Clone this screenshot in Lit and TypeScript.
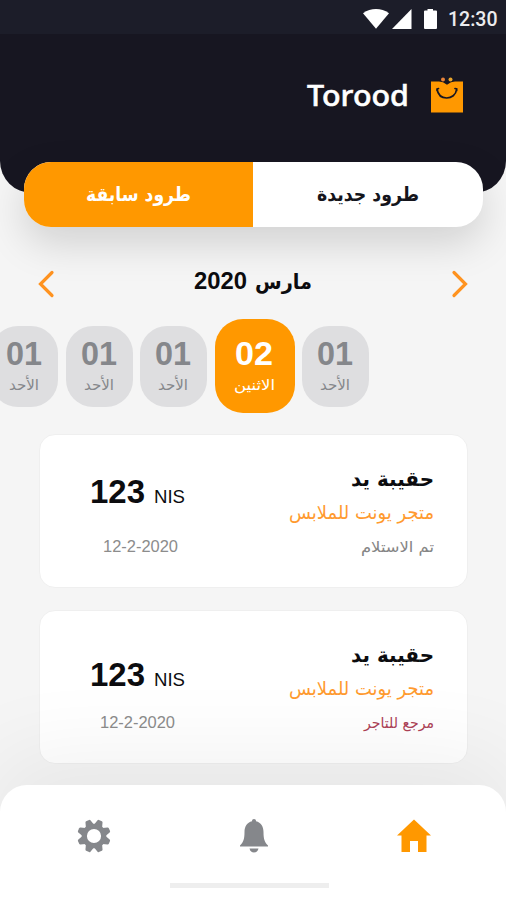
import { LitElement, html, css, svg } from "lit";
import { customElement } from "lit/decorators.js";

/** One line of text set to a given width; the baseline is the bottom of its box. */
const line = (text: string, width: number, cls: string) => html`
  <svg class="line ${cls}" width=${width} height="10" direction="ltr">
    <text x="0" y="10" textLength=${width} lengthAdjust="spacingAndGlyphs">${text}</text>
  </svg>`;

interface Day { num: string; name: string; active?: boolean }
interface Parcel { status: string; statusWidth: number; returned: boolean; kind: string }

const DAYS: Day[] = [
  { num: "01", name: "الأحد" },
  { num: "01", name: "الأحد" },
  { num: "01", name: "الأحد" },
  { num: "02", name: "الاثنين", active: true },
  { num: "01", name: "الأحد" },
];

const PARCELS: Parcel[] = [
  { status: "تم الاستلام", statusWidth: 73, returned: false, kind: "first" },
  { status: "مرجع للتاجر", statusWidth: 70, returned: true, kind: "second" },
];

const TEETH = [22.5, 67.5, 112.5, 157.5, 202.5, 247.5, 292.5, 337.5];

@customElement("app-root")
export class AppRoot extends LitElement {
  static styles = css`
    :host {
      display: flex;
      flex-direction: column;
      height: 900px;
      width: 506px;
      overflow: hidden;
      background: #f5f5f5;
      font-family: "Liberation Sans", "DejaVu Sans", sans-serif;
    }
    svg { display: block; overflow: visible; flex: none; }
    .line text { fill: currentColor; }
    .ar { font-family: "DejaVu Sans", sans-serif; }
    .header {
      height: 193px;
      background: #171621;
      border-radius: 0 0 32px 32px;
      flex: none;
    }
    .status {
      height: 34px;
      background: #1c1d29;
      display: flex;
      justify-content: flex-end;
      align-items: flex-start;
      box-sizing: border-box;
      padding: 9px 9px 0 0;
    }
    .time { margin-top: 7px; margin-left: 11px; font: 500 19.5px Roboto, sans-serif; color: #ececee; }
    .brand { display: flex; justify-content: flex-end; gap: 22px; padding: 43px 43px 0 0; }
    .name { margin-top: 19px; font: 500 29px "Noto Sans", sans-serif; color: #fff; }
    .name text { stroke: #fff; stroke-width: 0.5px; }
    .tabs {
      display: flex;
      flex: none;
      width: 459px;
      height: 65px;
      margin: -31px 0 0 23.5px;
      border-radius: 27px;
      overflow: hidden;
      background: #fff;
      box-shadow: 0 16px 40px rgba(0, 0, 0, 0.15);
      position: relative;
    }
    .tab { flex: 1; display: flex; justify-content: center; padding-top: 29px; color: #15151c; }
    .tab.on { background: #ff9800; color: #fff; }
    .tabtext { font-weight: 700; font-size: 19.5px; }
    .month {
      display: flex;
      justify-content: space-between;
      flex: none;
      height: 26px;
      margin: 44px 38px 0;
    }
    .title { display: flex; gap: 8px; padding: 8px 0 0 0; color: #0c0c0f; }
    .year { font-weight: 700; font-size: 23.5px; }
    .mname { font-weight: 700; font-size: 20.5px; }
    .days {
      display: flex;
      flex: none;
      gap: 7.5px;
      align-items: center;
      height: 94px;
      margin: 22px 0 0 -9px;
    }
    .day {
      width: 67px;
      height: 81px;
      flex: none;
      border-radius: 27px;
      background: #dedee0;
      color: #85878b;
      display: flex;
      flex-direction: column;
      align-items: center;
      box-sizing: border-box;
      padding: 29px 1px 0 0;
    }
    .day.on { width: 80px; height: 94px; padding-top: 36px; border-radius: 28px; background: #ff9800; color: #fff; }
    .num { font-weight: 700; font-size: 32.5px; }
    .dname { font-size: 15px; margin-top: 15px; }
    .cards { display: flex; flex-direction: column; gap: 22px; padding: 21px 38.5px 0 38.5px; flex: none; }
    .card {
      display: flex;
      justify-content: space-between;
      height: 154px;
      box-sizing: border-box;
      border: 1px solid #efefef;
      border-radius: 16px;
      background: #fff;
      padding: 0 32.5px 0 47.5px;
    }
    .left, .right { display: flex; flex-direction: column; }
    .right { align-items: flex-end; padding-top: 41px; }
    .left { align-items: center; padding-top: 58px; width: 100px; }
    .second .left { padding-top: 65px; }
    .item { font-weight: 700; font-size: 20.5px; color: #0c0c0f; }
    .store { font-size: 18.5px; color: #ff9a2e; margin-top: 23px; }
    .state { font-size: 15px; color: #858585; margin-top: 23px; }
    .state.back { color: #ad4257; }
    .amount { display: flex; gap: 9px; color: #0c0c0f; }
    .sum { font-weight: 700; font-size: 33px; }
    .cur { font-size: 19px; }
    .date { font-size: 16.3px; color: #8c8c8c; margin: 39px 0 0 7px; }
    .second .date { margin: 32px 0 0 1px; }
    .nav {
      height: 115px;
      flex: none;
      margin-top: auto;
      background: #fff;
      border-radius: 27px 27px 0 0;
      box-shadow: 0 -20px 90px 10px rgba(0, 0, 0, 0.06);
      display: flex;
      flex-direction: column;
      align-items: center;
      position: relative;
    }
    .icons { display: flex; justify-content: space-between; width: 354px; padding-top: 34px; height: 64px; margin-left: 2px; }
    .bar { width: 159px; height: 5px; background: #eee; margin-right: 8px; }
  `;

  private statusBar() {
    return html`
      <div class="status">
        <svg width="74" height="20" viewBox="0 0 74 20" fill="#fff">
          <path d="M0 4.2C8-1.4 18-1.4 26 4.2L13 19.8Z" />
          <path d="M48.500 0V20H29Z" />
          <path d="M61 2.500Q61 1.500 62 1.500H64.500V0H70V1.500H73Q74 1.500 74 2.500V19Q74 20 73 20H62Q61 20 61 19Z" />
        </svg>
        ${line("12:30", 49.5, "time")}
      </div>`;
  }

  private gear() {
    return svg`
      <g fill="#85878b">
        ${TEETH.map((a) => svg`<path transform="rotate(${a} 17 17)" d="M12.800 6L14.300 1.200Q14.600 .3 15.400 .3H18.600Q19.400 .3 19.700 1.200L21.200 6Z" />`)}
        <circle cx="17" cy="17" r="9.700" fill="none" stroke="#85878b" stroke-width="5.200" />
      </g>`;
  }

  private card(p: Parcel) {
    return html`
      <article class="card ${p.kind}">
        <div class="left">
          <div class="amount">${line("123", 55, "sum")}${line("NIS", 31, "cur")}</div>
          ${line("12-2-2020", 75, "date")}
        </div>
        <div class="right">
          ${line("حقيبة يد", 83, "ar item")}
          ${line("متجر يونت للملابس", 145, "ar store")}
          ${line(p.status, p.statusWidth, p.returned ? "ar state back" : "ar state")}
        </div>
      </article>`;
  }

  render() {
    return html`
      <header class="header">
        ${this.statusBar()}
        <div class="brand">
          ${line("Torood", 102, "name")}
          <svg width="32" height="36" viewBox="0 0 32 36">
            <path fill="#ff9800" d="M0 4.500H8Q12 4.500 16 7.700Q20 4.500 24 4.500H32V35.500H0Z" />
            <circle cx="12" cy="2.500" r="2" fill="#e8833a" />
            <circle cx="19.500" cy="2.500" r="2" fill="#e9a52c" />
            <path fill="none" stroke="#171621" stroke-width="1.700" stroke-linecap="round" d="M6 13.500V12L7.500 11.500M6 12C7 18 11 21 15.700 21S25 18 25.700 12M24 11.500L25.700 12V13.500" />
          </svg>
        </div>
      </header>
      <div class="tabs">
        <div class="tab on">${line("طرود سابقة", 105, "ar tabtext")}</div>
        <div class="tab">${line("طرود جديدة", 102, "ar tabtext")}</div>
      </div>
      <div class="month">
        <svg width="16" height="26" viewBox="0 0 16 26"><path fill="none" stroke="#ff9320" stroke-width="3.200" stroke-linecap="round" d="M14 1.500L2.500 13L14 24.500" /></svg>
        <div class="title">${line("2020", 53, "year")}${line("مارس", 57, "ar mname")}</div>
        <svg width="16" height="26" viewBox="0 0 16 26"><path fill="none" stroke="#ff9320" stroke-width="3.200" stroke-linecap="round" d="M2 1.500L13.500 13L2 24.500" /></svg>
      </div>
      <div class="days">
        ${DAYS.map((d) => html`
          <div class="day ${d.active ? "on" : ""}">
            ${line(d.num, d.active ? 38 : 36, "num")}
            ${line(d.name, d.active ? 41 : 30, "ar dname")}
          </div>`)}
      </div>
      <section class="cards">${PARCELS.map((p) => this.card(p))}</section>
      <nav class="nav">
        <div class="icons">
          <svg width="34" height="34" viewBox="0 0 34 34">${this.gear()}</svg>
          <svg width="28" height="34" viewBox="0 0 28 34" fill="#85878b">
            <path d="M14 0Q16 0 16 1.800V2.200C21 3.400 23.500 7.500 23.500 13C23.500 20 24.500 23 28 26.500V27.500H0V26.500C3.500 23 4.500 20 4.500 13C4.500 7.500 7 3.400 12 2.200V1.800Q12 0 14 0Z" />
            <path d="M9.500 29.500H18.500Q17.500 33.500 14 33.500T9.500 29.500Z" />
          </svg>
          <svg width="34" height="34" viewBox="0 0 34 34" fill="#ff9800"><path d="M17 .5L34 16.500H29.500V33H21V22H13V33H4.500V16.500H0Z" /></svg>
        </div>
        <div class="bar"></div>
      </nav>
    `;
  }
}
